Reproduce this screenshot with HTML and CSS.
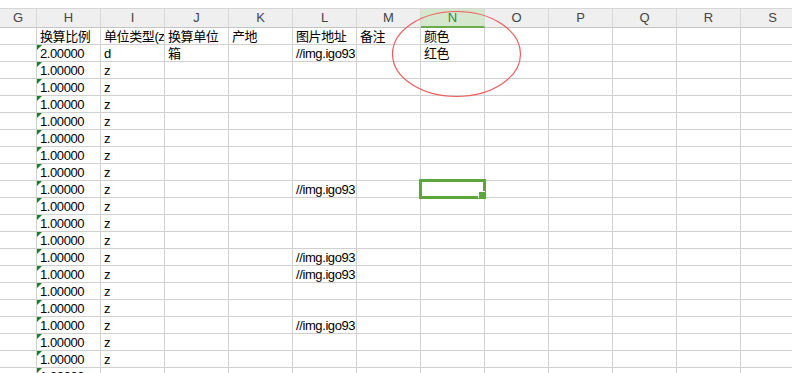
FILE: index.html
```html
<!DOCTYPE html>
<html lang="zh">
<head>
  <meta charset="UTF-8">
  <meta name="viewport" content="width=device-width, initial-scale=1.0">
  <title>商品表</title>
  <link rel="stylesheet" href="styles.css">
</head>
<body>
  <div class="sheet">
    <div class="topbar"></div>
    <div class="grid" id="grid"></div>
    <div class="selection"><span class="handle"></span></div>
    <svg class="mark" width="792" height="373" viewBox="0 0 792 373">
      <ellipse cx="456.5" cy="54" rx="64" ry="42.5" fill="none" stroke="#ee5d5d" stroke-width="1.2"/>
    </svg>
  </div>

  <script>
    // 列标题（从 G 开始）
    const columns = ["G", "H", "I", "J", "K", "L", "M", "N", "O", "P", "Q", "R", "S"];
    const activeColumn = "N";
    const img = "//img.igo93.com/upload/goods.jpg";

    // 表格数据：每行从 H 列开始
    const rows = [
      ["换算比例", "单位类型(zhi)", "换算单位", "产地", "图片地址", "备注", "颜色"],
      ["2.00000", "d", "箱", "", img, "", "红色"]
    ];
    const imgRows = [10, 14, 15, 18];
    for (let r = 3; r <= 21; r++) {
      rows.push(["1.00000", "z", "", "", imgRows.includes(r) ? img : "", "", ""]);
    }

    const grid = document.getElementById("grid");

    // 列头
    columns.forEach(function (name) {
      const cell = document.createElement("div");
      cell.className = name === activeColumn ? "head active" : "head";
      cell.textContent = name;
      grid.appendChild(cell);
    });

    // 数据行
    rows.forEach(function (row, index) {
      columns.forEach(function (name, c) {
        const cell = document.createElement("div");
        cell.className = "cell";
        const value = c === 0 ? "" : (row[c - 1] || "");
        cell.textContent = value;
        if (name === "H" && index > 0) {
          cell.classList.add("flag");
        }
        grid.appendChild(cell);
      });
    });
  </script>
</body>
</html>
```

FILE: styles.css
```css
body {
  margin: 0;
  background-color: #fff;
  overflow: hidden;
  font-family: "Liberation Sans", "Noto Sans CJK SC", sans-serif;
}
.sheet {
  position: relative;
  width: 792px;
  height: 373px;
  overflow: hidden;
}
.topbar {
  height: 8px;
  background-color: #fff;
}
.grid {
  display: grid;
  grid-template-columns: 37px repeat(12, 64px);
  grid-template-rows: 20px;
  grid-auto-rows: 17px;
}
.head {
  box-sizing: border-box;
  background-color: #efefef;
  border-top: 1px solid #d6d6d6;
  border-bottom: 1px solid #c4c4c4;
  border-right: 1px solid #d8d8d8;
  color: #444;
  font-size: 13px;
  line-height: 18px;
  text-align: center;
}
.head.active {
  background-color: #d5e7cc;
  color: #2f8a3a;
  border-bottom: 2px solid #6aab4b;
}
.cell {
  position: relative;
  box-sizing: border-box;
  border-right: 1px solid #d0d0d0;
  border-bottom: 1px solid #d0d0d0;
  padding: 1px 0 0 3px;
  font-size: 13px;
  letter-spacing: -0.4px;
  line-height: 16px;
  color: #000;
  white-space: nowrap;
  overflow: hidden;
}
.flag::before {
  content: "";
  position: absolute;
  top: 0;
  left: 0;
  border-top: 5px solid #1d7d2a;
  border-right: 5px solid transparent;
}
.selection {
  position: absolute;
  left: 419px;
  top: 179px;
  width: 67px;
  height: 20px;
  box-sizing: border-box;
  border: 3px solid #5ea53b;
}
.handle {
  position: absolute;
  right: -2px;
  bottom: -2px;
  width: 6px;
  height: 6px;
  background-color: #5ea53b;
  border-left: 1px solid #fff;
  border-top: 1px solid #fff;
}
.mark {
  position: absolute;
  top: 0;
  left: 0;
  pointer-events: none;
}
```
